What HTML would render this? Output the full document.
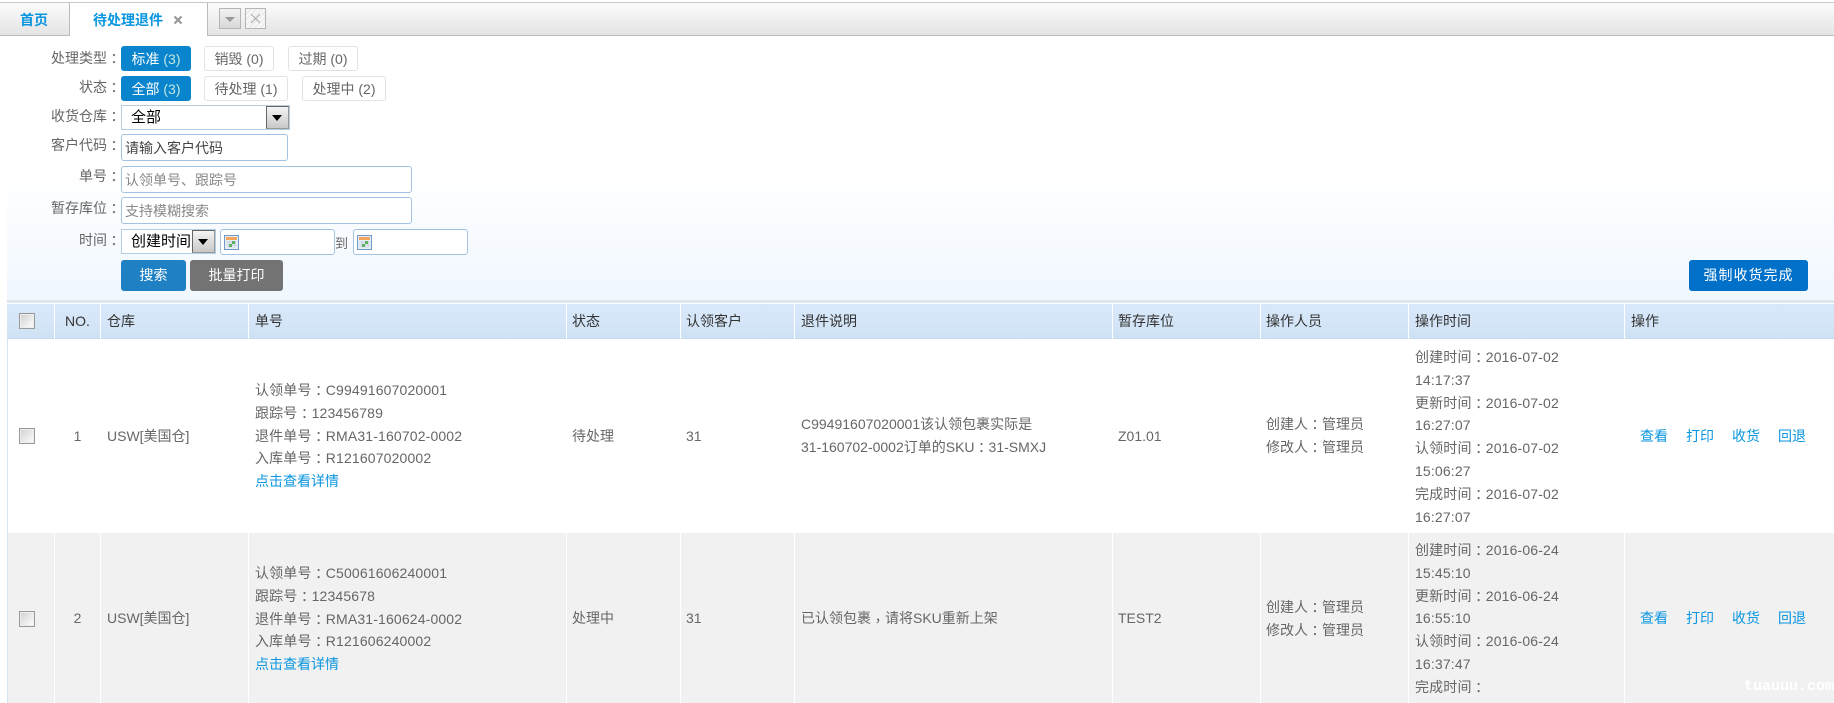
<!DOCTYPE html>
<html>
<head>
<meta charset="utf-8">
<title>待处理退件</title>
<style>
html,body{margin:0;padding:0;background:#fff}
body{position:relative;width:1834px;height:703px;overflow:hidden;font-family:"Liberation Sans","Noto Sans CJK SC",sans-serif;font-size:14px;color:#666}
div,span.a{box-sizing:border-box}
.a{position:absolute}
.t{position:absolute;white-space:nowrap}
i.p{font-style:normal;font-family:"Noto Sans CJK TC",sans-serif;position:relative;top:1px}
i.p.q{top:3px}
.lab{position:absolute;left:21px;width:100px;text-align:right;font-size:14px;line-height:20px;color:#666;white-space:nowrap}
.chip{position:absolute;height:25px;border:1px solid #e2e2e2;border-radius:3px;background:#fff;color:#666;font-size:14px;line-height:24px;text-align:center;white-space:nowrap}
.chip.on{background:#0a84cc;border-color:#0a84cc;color:#fff}
.chip.on b{font-weight:normal;color:#bfe6e0}
.inp{position:absolute;border:1px solid #a3c3e0;border-radius:3px;background:#fff;font-size:14px;line-height:27px;padding-left:3px;color:#888;white-space:nowrap}
.sel{position:absolute;border:1px solid #b5cde0;background:#fff;color:#000;font-size:15px;line-height:24px;padding-left:9px;white-space:nowrap}
.arr{position:absolute;right:0;top:0;width:21px;bottom:0;background:linear-gradient(#f4f4f4,#c8c8c8);border:1px solid #666;border-right-color:#999;border-bottom-color:#999}
.arr:after{content:"";position:absolute;left:5px;top:8px;border:5px solid transparent;border-top:6px solid #000;border-bottom:0}
.btn{position:absolute;top:260px;height:31px;border-radius:3px;color:#fff;text-align:center;font-size:14px;line-height:31px;white-space:nowrap}
.th{position:absolute;top:321px;transform:translateY(-50%);font-size:14px;line-height:18px;color:#333;white-space:nowrap}
.vs{position:absolute;width:1px;background:#fff}
.cb{position:absolute;left:19px;width:16px;height:16px;border:1px solid #999;background:linear-gradient(135deg,#d0d0d0,#fff);box-shadow:inset 0 0 0 1px #eee}
.c{position:absolute;white-space:nowrap;font-size:14px;color:#666}
.l{line-height:22.8px}
.n{letter-spacing:.15px}
.lnk{color:#0a96e0;letter-spacing:0}
.act{position:absolute;color:#0a96e0;line-height:20px;white-space:nowrap;font-size:14px}
</style>
</head>
<body>

<!-- tab bar -->
<div class="a" style="left:0;top:2px;width:1834px;height:34px;background:linear-gradient(#fbfbfb,#e4e4e4);border-top:1px solid #c8c8c8;border-bottom:1px solid #bbb"></div>
<div class="a" style="left:69px;top:3px;width:1px;height:33px;background:#bbb"></div>
<div class="a" style="left:70px;top:3px;width:137px;height:33px;background:#fff"></div>
<div class="a" style="left:207px;top:3px;width:1px;height:33px;background:#bbb"></div>
<div class="t" style="left:20px;top:10px;font-size:14px;line-height:20px;font-weight:bold;color:#0a96e0">首页</div>
<div class="t" style="left:93px;top:10px;font-size:14px;line-height:20px;font-weight:bold;color:#0a96e0">待处理退件</div>
<svg class="a" style="left:173px;top:15px" width="10" height="10" viewBox="0 0 10 10"><path d="M1.5 1.5L8.5 8.5M8.5 1.5L1.5 8.5" stroke="#999" stroke-width="2.2" fill="none"/></svg>
<div class="a" style="left:219px;top:8px;width:22px;height:21px;border:1px solid #b5b5b5;background:linear-gradient(#f2f2f2,#d8d8d8)"></div>
<div class="a" style="left:225px;top:17px;width:0;height:0;border:5px solid transparent;border-top:5px solid #999;border-bottom:0"></div>
<div class="a" style="left:245px;top:8px;width:21px;height:21px;border:1px solid #b5b5b5;background:repeating-linear-gradient(135deg,#f6f6f6 0 3px,#e8e8e8 3px 4px)"></div>
<svg class="a" style="left:250px;top:13px" width="11" height="11" viewBox="0 0 11 11"><path d="M1 1L10 10M10 1L1 10" stroke="#aaa" stroke-width="1" fill="none"/></svg>

<!-- filter panel -->
<div class="a" style="left:7px;top:36px;width:1827px;height:265px;background:linear-gradient(#fff 0,#fff 50%,#f0f7ff 100%)"></div>
<div class="a" style="left:7px;top:300px;width:1827px;height:3px;background:#dde7f0"></div>

<div class="lab" style="top:48px">处理类型<i class="p">：</i></div>
<div class="chip on" style="left:121px;top:46px;width:70px">标准 <b>(3)</b></div>
<div class="chip" style="left:204px;top:46px;width:70px">销毁 (0)</div>
<div class="chip" style="left:288px;top:46px;width:70px">过期 (0)</div>

<div class="lab" style="top:77px">状态<i class="p">：</i></div>
<div class="chip on" style="left:121px;top:76px;width:70px">全部 <b>(3)</b></div>
<div class="chip" style="left:204px;top:76px;width:84px">待处理 (1)</div>
<div class="chip" style="left:302px;top:76px;width:84px">处理中 (2)</div>

<div class="lab" style="top:106px">收货仓库<i class="p">：</i></div>
<div class="sel" style="left:121px;top:105px;width:169px;height:25px">全部<span class="arr"></span></div>

<div class="lab" style="top:135px">客户代码<i class="p">：</i></div>
<div class="inp" style="left:121px;top:134px;width:167px;height:27px;color:#444">请输入客户代码</div>

<div class="lab" style="top:166px">单号<i class="p">：</i></div>
<div class="inp" style="left:121px;top:166px;width:291px;height:27px">认领单号、跟踪号</div>

<div class="lab" style="top:198px">暂存库位<i class="p">：</i></div>
<div class="inp" style="left:121px;top:197px;width:291px;height:27px">支持模糊搜索</div>

<div class="lab" style="top:230px">时间<i class="p">：</i></div>
<div class="sel" style="left:121px;top:229px;width:95px;height:25px">创建时间<span class="arr"></span></div>

<div class="inp" style="left:220px;top:229px;width:115px;height:26px"></div>
<svg class="a" style="left:224px;top:235px" width="15" height="15" viewBox="0 0 15 15"><rect x=".5" y=".5" width="14" height="14" fill="#e8eef5" stroke="#6f9ac8"/><rect x="2" y="2" width="11" height="3" fill="#f5a45c"/><path d="M2 7h11M2 10h11M5 6v7M8 6v7M11 6v7" stroke="#c5d2de" stroke-width="1"/><rect x="5" y="9" width="3" height="3" fill="#5fb05f"/><rect x="8" y="6" width="3" height="3" fill="#5fb05f"/></svg>
<div class="t" style="left:335px;top:234px;font-size:13px;line-height:20px;color:#666">到</div>
<div class="inp" style="left:353px;top:229px;width:115px;height:26px"></div>
<svg class="a" style="left:357px;top:235px" width="15" height="15" viewBox="0 0 15 15"><rect x=".5" y=".5" width="14" height="14" fill="#e8eef5" stroke="#6f9ac8"/><rect x="2" y="2" width="11" height="3" fill="#f5a45c"/><path d="M2 7h11M2 10h11M5 6v7M8 6v7M11 6v7" stroke="#c5d2de" stroke-width="1"/><rect x="5" y="9" width="3" height="3" fill="#5fb05f"/><rect x="8" y="6" width="3" height="3" fill="#5fb05f"/></svg>

<div class="btn" style="left:121px;width:65px;background:#1f80c4">搜索</div>
<div class="btn" style="left:190px;width:93px;background:#737373">批量打印</div>
<div class="btn" style="left:1689px;width:119px;background:#0070c9;letter-spacing:1px">强制收货完成</div>

<!-- table header -->
<div class="a" style="left:7px;top:304px;width:1827px;height:35px;background:linear-gradient(#d9e9fb,#cfe2f4);border-bottom:1px solid #c4daf0"></div>
<div class="a" style="left:7px;top:339px;width:1px;height:364px;background:#d5e5f5"></div>

<!-- row backgrounds -->
<div class="a" style="left:8px;top:533px;width:1826px;height:170px;background:#f1f1f1"></div>

<!-- column separators -->
<div class="vs" style="left:54px;top:304px;height:35px"></div>
<div class="vs" style="left:100px;top:304px;height:35px"></div>
<div class="vs" style="left:248px;top:304px;height:35px"></div>
<div class="vs" style="left:566px;top:304px;height:35px"></div>
<div class="vs" style="left:680px;top:304px;height:35px"></div>
<div class="vs" style="left:794px;top:304px;height:35px"></div>
<div class="vs" style="left:1112px;top:304px;height:35px"></div>
<div class="vs" style="left:1260px;top:304px;height:35px"></div>
<div class="vs" style="left:1408px;top:304px;height:35px"></div>
<div class="vs" style="left:1624px;top:304px;height:35px"></div>

<div class="vs" style="left:54px;top:533px;height:170px"></div>
<div class="vs" style="left:100px;top:533px;height:170px"></div>
<div class="vs" style="left:248px;top:533px;height:170px"></div>
<div class="vs" style="left:566px;top:533px;height:170px"></div>
<div class="vs" style="left:680px;top:533px;height:170px"></div>
<div class="vs" style="left:794px;top:533px;height:170px"></div>
<div class="vs" style="left:1112px;top:533px;height:170px"></div>
<div class="vs" style="left:1260px;top:533px;height:170px"></div>
<div class="vs" style="left:1408px;top:533px;height:170px"></div>
<div class="vs" style="left:1624px;top:533px;height:170px"></div>

<!-- header cells -->
<div class="cb" style="top:313px"></div>
<div class="th" style="left:65px">NO.</div>
<div class="th" style="left:107px">仓库</div>
<div class="th" style="left:255px">单号</div>
<div class="th" style="left:572px">状态</div>
<div class="th" style="left:686px">认领客户</div>
<div class="th" style="left:801px">退件说明</div>
<div class="th" style="left:1118px">暂存库位</div>
<div class="th" style="left:1266px">操作人员</div>
<div class="th" style="left:1415px">操作时间</div>
<div class="th" style="left:1631px">操作</div>

<!-- row 1 -->
<div class="cb" style="top:428px"></div>
<div class="c" style="left:55px;width:45px;text-align:center;top:426px;line-height:20px">1</div>
<div class="c" style="left:107px;top:426px;line-height:20px">USW[美国仓]</div>
<div class="c l n" style="left:255px;top:379px">认领单号<i class="p">：</i>C99491607020001<br>跟踪号<i class="p">：</i>123456789<br>退件单号<i class="p">：</i>RMA31-160702-0002<br>入库单号<i class="p">：</i>R121607020002<br><span class="lnk">点击查看详情</span></div>
<div class="c" style="left:572px;top:426px;line-height:20px">待处理</div>
<div class="c" style="left:686px;top:426px;line-height:20px">31</div>
<div class="c l" style="left:801px;top:413px">C99491607020001该认领包裹实际是<br>31-160702-0002订单的SKU<i class="p">：</i>31-SMXJ</div>
<div class="c" style="left:1118px;top:426px;line-height:20px">Z01.01</div>
<div class="c l" style="left:1266px;top:413px">创建人<i class="p">：</i>管理员<br>修改人<i class="p">：</i>管理员</div>
<div class="c l n" style="left:1415px;top:346px">创建时间<i class="p">：</i>2016-07-02<br>14:17:37<br>更新时间<i class="p">：</i>2016-07-02<br>16:27:07<br>认领时间<i class="p">：</i>2016-07-02<br>15:06:27<br>完成时间<i class="p">：</i>2016-07-02<br>16:27:07</div>
<div class="act" style="left:1640px;top:426px">查看</div>
<div class="act" style="left:1686px;top:426px">打印</div>
<div class="act" style="left:1732px;top:426px">收货</div>
<div class="act" style="left:1778px;top:426px">回退</div>

<!-- row 2 -->
<div class="cb" style="top:611px"></div>
<div class="c" style="left:55px;width:45px;text-align:center;top:608px;line-height:20px">2</div>
<div class="c" style="left:107px;top:608px;line-height:20px">USW[美国仓]</div>
<div class="c l n" style="left:255px;top:562px">认领单号<i class="p">：</i>C50061606240001<br>跟踪号<i class="p">：</i>12345678<br>退件单号<i class="p">：</i>RMA31-160624-0002<br>入库单号<i class="p">：</i>R121606240002<br><span class="lnk">点击查看详情</span></div>
<div class="c" style="left:572px;top:608px;line-height:20px">处理中</div>
<div class="c" style="left:686px;top:608px;line-height:20px">31</div>
<div class="c" style="left:801px;top:608px;line-height:20px">已认领包裹<i class="p q">，</i>请将SKU重新上架</div>
<div class="c" style="left:1118px;top:608px;line-height:20px">TEST2</div>
<div class="c l" style="left:1266px;top:596px">创建人<i class="p">：</i>管理员<br>修改人<i class="p">：</i>管理员</div>
<div class="c l n" style="left:1415px;top:539px">创建时间<i class="p">：</i>2016-06-24<br>15:45:10<br>更新时间<i class="p">：</i>2016-06-24<br>16:55:10<br>认领时间<i class="p">：</i>2016-06-24<br>16:37:47<br>完成时间<i class="p">：</i></div>
<div class="act" style="left:1640px;top:608px">查看</div>
<div class="act" style="left:1686px;top:608px">打印</div>
<div class="act" style="left:1732px;top:608px">收货</div>
<div class="act" style="left:1778px;top:608px">回退</div>

<!-- watermark -->
<div class="t" style="left:1744px;top:679px;font-family:'Liberation Mono',monospace;font-size:15px;line-height:16px;font-weight:bold;color:#fff">tuauuu.com</div>

</body>
</html>
